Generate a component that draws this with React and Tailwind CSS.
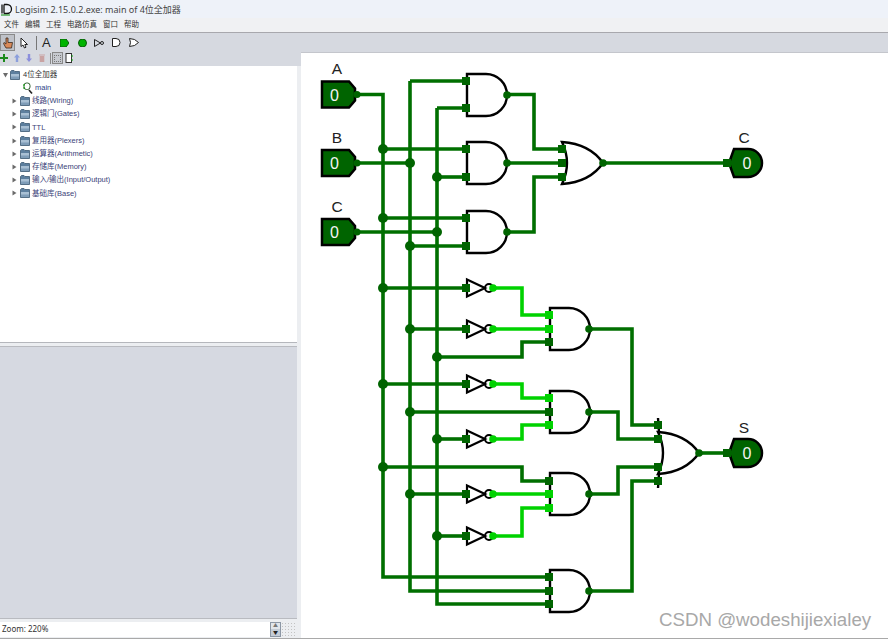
import React from "react";

const DARK = "#006400";
const WIRE = "#006f00";
const LIVE = "#00d200";

/* ================= TREE DATA ================= */

const libs = [
  "线路(Wiring)",
  "逻辑门(Gates)",
  "TTL",
  "复用器(Plexers)",
  "运算器(Arithmetic)",
  "存储库(Memory)",
  "输入/输出(Input/Output)",
  "基础库(Base)",
];

const menus = ["文件", "编辑", "工程", "电路仿真", "窗口", "帮助"];

/* ================= CIRCUIT DATA ================= */

const darkWires = [
  "M356 94.5H383V577H548",
  "M410 81H465M410 81V591H548",
  "M437 108H465M437 108V604H548",
  "M356 163H410",
  "M356 232H437",
  "M383 149H465",
  "M437 177H465",
  "M383 218H465",
  "M410 246H465",
  "M507 94.5H534V149H562",
  "M507 163H562",
  "M507 232H534V177H562",
  "M603 163H725",
  "M383 288H466",
  "M410 329H466",
  "M437 357H522V342H548",
  "M383 384H466",
  "M410 412H548",
  "M437 439H466",
  "M383 467H522V481H548",
  "M410 494H466",
  "M437 536H466",
  "M589 329H632V425H658",
  "M589 412H618V439H658",
  "M589 494H618V467H658",
  "M589 591H632V481H658",
  "M699 453H725",
];

const liveWires = [
  "M493 288H522V315H548",
  "M493 329H548",
  "M493 384H522V398H548",
  "M493 439H522V425H548",
  "M493 494H548",
  "M493 536H522V508H548",
];

const junctions = [
  [383, 149], [383, 218], [383, 288], [383, 384], [383, 467],
  [410, 163], [410, 246], [410, 329], [410, 412], [410, 494],
  [437, 177], [437, 232], [437, 357], [437, 439], [437, 536],
];

const and2 = [
  { y: 95, inputs: [81, 108] },
  { y: 163, inputs: [149, 177] },
  { y: 232, inputs: [218, 246] },
];

const and3 = [
  { y: 329, inputs: [[315, LIVE], [329, LIVE], [342, DARK]] },
  { y: 412, inputs: [[398, LIVE], [412, DARK], [425, LIVE]] },
  { y: 494, inputs: [[481, DARK], [494, LIVE], [508, LIVE]] },
  { y: 591, inputs: [[577, DARK], [591, DARK], [604, DARK]] },
];

const nots = [288, 329, 384, 439, 494, 536];

const Stub = ({ x, y, color = DARK }) => (
  <rect x={x} y={y - 4} width="8" height="8" fill={color} />
);

const InputPin = ({ y, label }) => (
  <g>
    <path
      d={`M322 ${y - 13}H349L355 ${y - 6}V${y + 6}L349 ${y + 13}H322Z`}
      fill={DARK}
      stroke="black"
      strokeWidth="2.5"
    />
    <circle cx="357" cy={y} r="3.5" fill={DARK} />
    <text x="334.5" y={y + 6} fontSize="16" fill="#f4f4f4" textAnchor="middle">0</text>
    <text x="337" y={y - 20.5} fontSize="15.5" fill="#222" textAnchor="middle">{label}</text>
  </g>
);

const OutputPin = ({ y, label }) => (
  <g>
    <path
      d={`M729 ${y}L734 ${y - 14}H748A14 14 0 0 1 748 ${y + 14}H734Z`}
      fill={DARK}
      stroke="black"
      strokeWidth="2.5"
    />
    <Stub x={723} y={y} />
    <text x="747" y={y + 6} fontSize="16" fill="#f4f4f4" textAnchor="middle">0</text>
    <text x="744" y={y - 20.5} fontSize="15.5" fill="#222" textAnchor="middle">{label}</text>
  </g>
);

const Circuit = () => (
  <svg viewBox="301 53 587 584" className="w-[587px] h-[584px] block" fontFamily="Liberation Sans, sans-serif">
    <g fill="none" stroke={WIRE} strokeWidth="3.6">
      {darkWires.map((d, i) => <path key={i} d={d} />)}
    </g>
    <g fill="none" stroke={LIVE} strokeWidth="3.6">
      {liveWires.map((d, i) => <path key={i} d={d} />)}
    </g>
    {junctions.map(([x, y], i) => (
      <circle key={i} cx={x} cy={y} r="5" fill={DARK} />
    ))}

    {and2.map((g) => (
      <g key={g.y}>
        <path
          d={`M467 ${g.y - 21}H486A21 21 0 0 1 486 ${g.y + 21}H467Z`}
          fill="none"
          stroke="black"
          strokeWidth="2.4"
        />
        {g.inputs.map((y) => <Stub key={y} x={462} y={y} />)}
        <circle cx="507" cy={g.y} r="3.8" fill={DARK} />
      </g>
    ))}

    {and3.map((g) => (
      <g key={g.y}>
        <path
          d={`M550 ${g.y - 21}H569A21 21 0 0 1 569 ${g.y + 21}H550Z`}
          fill="none"
          stroke="black"
          strokeWidth="2.4"
        />
        {g.inputs.map(([y, c]) => <Stub key={y} x={545} y={y} color={c} />)}
        <circle cx="589" cy={g.y} r="3.8" fill={DARK} />
      </g>
    ))}

    {nots.map((y) => (
      <g key={y}>
        <path
          d={`M467 ${y - 8.5}L485 ${y}L467 ${y + 8.5}Z`}
          fill="none"
          stroke="black"
          strokeWidth="2.2"
        />
        <circle cx="489" cy={y} r="4" fill="none" stroke="black" strokeWidth="2" />
        <Stub x={462} y={y} />
        <circle cx="493" cy={y} r="3.8" fill={LIVE} />
      </g>
    ))}

    {/* top OR gate */}
    <g fill="none" stroke="black" strokeWidth="2.4">
      <path d="M562 142Q590 144 603 163Q590 182 562 184Q572 163 562 142Z" />
    </g>
    {[149, 163, 177].map((y) => <Stub key={y} x={558} y={y} />)}
    <circle cx="603" cy="163" r="3.8" fill={DARK} />

    {/* output OR gate */}
    <g fill="none" stroke="black" strokeWidth="2.4">
      <path d="M658 432Q686 434 699 453Q686 472 658 474Q668 453 658 432Z" />
      <path d="M658 418L659 432M659 474L658 488" />
    </g>
    {[425, 439, 467, 481].map((y) => <Stub key={y} x={654} y={y} />)}
    <circle cx="699" cy="453" r="3.8" fill={DARK} />

    <InputPin y={94.5} label="A" />
    <InputPin y={163} label="B" />
    <InputPin y={232} label="C" />
    <OutputPin y={163} label="C" />
    <OutputPin y={453} label="S" />
  </svg>
);

/* ================= SMALL ICONS ================= */

const Folder = () => (
  <svg width="10" height="10" viewBox="0 0 10 10" className="shrink-0">
    <path d="M0.5 1.5V9.5H9.5V1.5H5L4 0.5H1.5Z" fill="#5d7f9e" stroke="#3f5a74" strokeWidth="0.8" />
    <path d="M1 4H9V9H1Z" fill="#a9c0d4" />
    <path d="M1 6.5H9V9H1Z" fill="#7f9db8" />
  </svg>
);

const Arrow = ({ down }) => (
  <svg width="5" height="6" viewBox="0 0 5 6" className="shrink-0">
    <path d={down ? "M0 1H5L2.5 5.5Z" : "M0.5 0.5L4.5 3L0.5 5.5Z"} fill="#6b6b6b" />
  </svg>
);

const MainIcon = () => (
  <svg width="10" height="12" viewBox="0 0 10 12" className="shrink-0">
    <rect x="1" y="1" width="6" height="6.5" rx="2.5" fill="none" stroke="#2f5f2f" strokeWidth="1" />
    <path d="M0 3H2M0 6H2" stroke="#00a000" strokeWidth="1" />
    <path d="M6 8L9 11.5" stroke="#222" strokeWidth="1.6" />
  </svg>
);

const Toolbar = () => (
  <div className="h-[19px] flex items-center bg-[#d6d9e0]">
    <div className="w-[15px] h-[17px] flex items-center justify-center bg-[#bfc2c9] border border-[#8a8a8a]">
      <svg width="10" height="12" viewBox="0 0 10 12">
        <path d="M3 1V7L1 5.5L0.5 6.5L3 11H8.5L9.5 5.5H5V1Z" fill="#d98a5a" stroke="#3a2a20" strokeWidth="0.8" />
      </svg>
    </div>
    <svg width="9" height="12" viewBox="0 0 9 12" className="ml-[5px]">
      <path d="M1 1V9.5L3 8L4.5 11L6 10.2L4.8 7.5H7.5Z" fill="white" stroke="#222" strokeWidth="1" />
    </svg>
    <div className="w-[1px] h-[14px] bg-[#777] ml-[7px]" />
    <span className="ml-[5px] w-[9px] text-[13px] leading-none text-[#222] font-['Liberation_Sans',sans-serif]">A</span>
    <svg width="9" height="8" viewBox="0 0 9 8" className="ml-[9px]">
      <path d="M0 0H6L9 4L6 8H0Z" fill="#00b400" stroke="#0a5a0a" strokeWidth="1" />
    </svg>
    <svg width="9" height="8" viewBox="0 0 9 8" className="ml-[9px]">
      <circle cx="4.5" cy="4" r="4" fill="#00b400" stroke="#0a5a0a" strokeWidth="1" />
    </svg>
    <svg width="10" height="8" viewBox="0 0 10 8" className="ml-[7px]">
      <path d="M0.5 0.5L6.5 4L0.5 7.5Z" fill="none" stroke="#222" strokeWidth="1" />
      <circle cx="8" cy="4" r="1.5" fill="none" stroke="#222" strokeWidth="1" />
    </svg>
    <svg width="9" height="9" viewBox="0 0 9 9" className="ml-[8px]">
      <path d="M0.5 0.5H4A4 4 0 0 1 4 8.5H0.5Z" fill="white" stroke="#222" strokeWidth="1" />
    </svg>
    <svg width="10" height="9" viewBox="0 0 10 9" className="ml-[8px]">
      <path d="M0.5 0.5Q6 0.5 9.5 4.5Q6 8.5 0.5 8.5Q2.5 4.5 0.5 0.5Z" fill="white" stroke="#222" strokeWidth="1" />
    </svg>
  </div>
);

const ExplorerBar = () => (
  <div className="h-[14px] flex items-center bg-[#d6d9e0] pb-[2px]">
    <svg width="8" height="8" viewBox="0 0 8 8">
      <path d="M3 0H5V3H8V5H5V8H3V5H0V3H3Z" fill="#1c8a1c" />
    </svg>
    <svg width="6" height="8" viewBox="0 0 6 8" className="ml-[6px]">
      <path d="M3 0L6 3.5H4.2V8H1.8V3.5H0Z" fill="#8c9fdc" />
    </svg>
    <svg width="6" height="8" viewBox="0 0 6 8" className="ml-[6px]">
      <path d="M3 8L6 4.5H4.2V0H1.8V4.5H0Z" fill="#8c8fdc" />
    </svg>
    <svg width="6" height="8" viewBox="0 0 6 8" className="ml-[7px]">
      <path d="M0 0.5H6V1.5H0ZM0.7 2H5.3V8H0.7Z" fill="#c9a3a3" />
    </svg>
    <div className="w-[1px] h-[11px] bg-[#888] ml-[5px]" />
    <div className="ml-[1px] w-[11px] h-[12px] bg-[#c6c9cf] border border-[#888] flex flex-col justify-center items-center">
      <div className="w-[7px] h-[7px] border border-dotted border-[#777]" />
    </div>
    <svg width="8" height="10" viewBox="0 0 8 10" className="ml-[2px]">
      <rect x="1" y="0.5" width="5.5" height="9" fill="white" stroke="#333" strokeWidth="1" />
      <path d="M6.5 3H8M6.5 7H8" stroke="#00b400" strokeWidth="1.2" />
    </svg>
  </div>
);

/* ================= MAIN UI ================= */

const App = () => {
  return (
    <div className="relative w-[888px] h-[639px] overflow-hidden flex flex-col bg-white font-['Noto_Sans','Noto_Sans_CJK_SC',sans-serif]">
      <div className="h-[18px] shrink-0 flex items-center bg-[#eef2f9] pl-[1px]">
        <svg width="12" height="13" viewBox="0 0 12 13" className="shrink-0">
          <path d="M1 1.5V10.5M3 1.5V10.5M3 1.5H6A4.5 4.5 0 0 1 6 10.5H3" fill="none" stroke="#111" strokeWidth="1.3" />
          <path d="M0 12H9" stroke="#2a9a2a" strokeWidth="1.2" />
        </svg>
        <span className="ml-[2px] text-[9px] leading-none text-[#444] whitespace-nowrap">
          Logisim 2.15.0.2.exe: main of 4位全加器
        </span>
      </div>

      <div className="h-[15px] shrink-0 flex items-center bg-[#f0f1f3] border-b border-[#a8a8ad] pl-[4px] gap-[6px] text-[7.5px] leading-none text-[#333]">
        {menus.map((m) => <span key={m}>{m}</span>)}
      </div>

      <div className="flex flex-1 min-h-0">
        <div className="w-[301px] shrink-0 flex flex-col bg-[#eceef1] pr-[4px]">
          <div className="-mr-[4px]">
            <Toolbar />
          </div>
          <div className="-mr-[4px]">
            <ExplorerBar />
          </div>

          <div className="h-[277px] bg-white border-b border-[#b5b7bc] pl-[3px] pt-[2px] text-[7.5px] leading-none font-['Liberation_Sans','Noto_Sans_CJK_SC',sans-serif]">
            <div className="h-[13.2px] flex items-center">
              <Arrow down />
              <span className="ml-[2px]"><Folder /></span>
              <span className="ml-[3px] text-[#333]">4位全加器</span>
            </div>
            <div className="h-[13.2px] flex items-center pl-[20px]">
              <MainIcon />
              <span className="ml-[2px] text-[#2d3f87]">main</span>
            </div>
            {libs.map((lib) => (
              <div key={lib} className="h-[13.2px] flex items-center pl-[9px]">
                <Arrow />
                <span className="ml-[3px]"><Folder /></span>
                <span className="ml-[2px] text-[#3b3f78] whitespace-nowrap">{lib}</span>
              </div>
            ))}
          </div>

          <div className="h-[3px] bg-[#eceef1]" />

          <div className="flex-1 bg-[#d6d9e1] border-t border-b border-[#b9bbc0]" />

          <div className="h-[18px] mt-[1px] flex items-center">
            <div className="flex-1 h-[15px] bg-white flex items-center pl-[2px] text-[8px] leading-none text-[#333]">
              Zoom: 220%
            </div>
            <div className="w-[11px] h-[15px] flex flex-col border border-[#8c97a5]">
              <div className="flex-1 bg-[#e1e5ea] flex items-center justify-center text-[5px] leading-none text-[#777]">▲</div>
              <div className="flex-1 bg-[#c4ccd6] flex items-center justify-center text-[5px] leading-none text-[#222]">▼</div>
            </div>
            <div className="w-[16px] h-[15px] bg-[radial-gradient(#c3c3c3_1px,transparent_1px)] bg-[length:3px_3px]" />
          </div>
        </div>

        <div className="flex-1 flex flex-col min-w-0">
          <div className="h-[20px] shrink-0 bg-[#d6d9e0] border-b border-[#c4c6cc]" />
          <Circuit />
        </div>
      </div>

      <div className="h-[1px] shrink-0 bg-[#a9a9a9]" />

      <span className="absolute left-[659px] top-[609px] text-[18.7px] leading-[22px] text-[#a8a8a8] whitespace-nowrap font-['Liberation_Sans',sans-serif]">
        CSDN @wodeshijiexialey
      </span>
    </div>
  );
};

export default App;
